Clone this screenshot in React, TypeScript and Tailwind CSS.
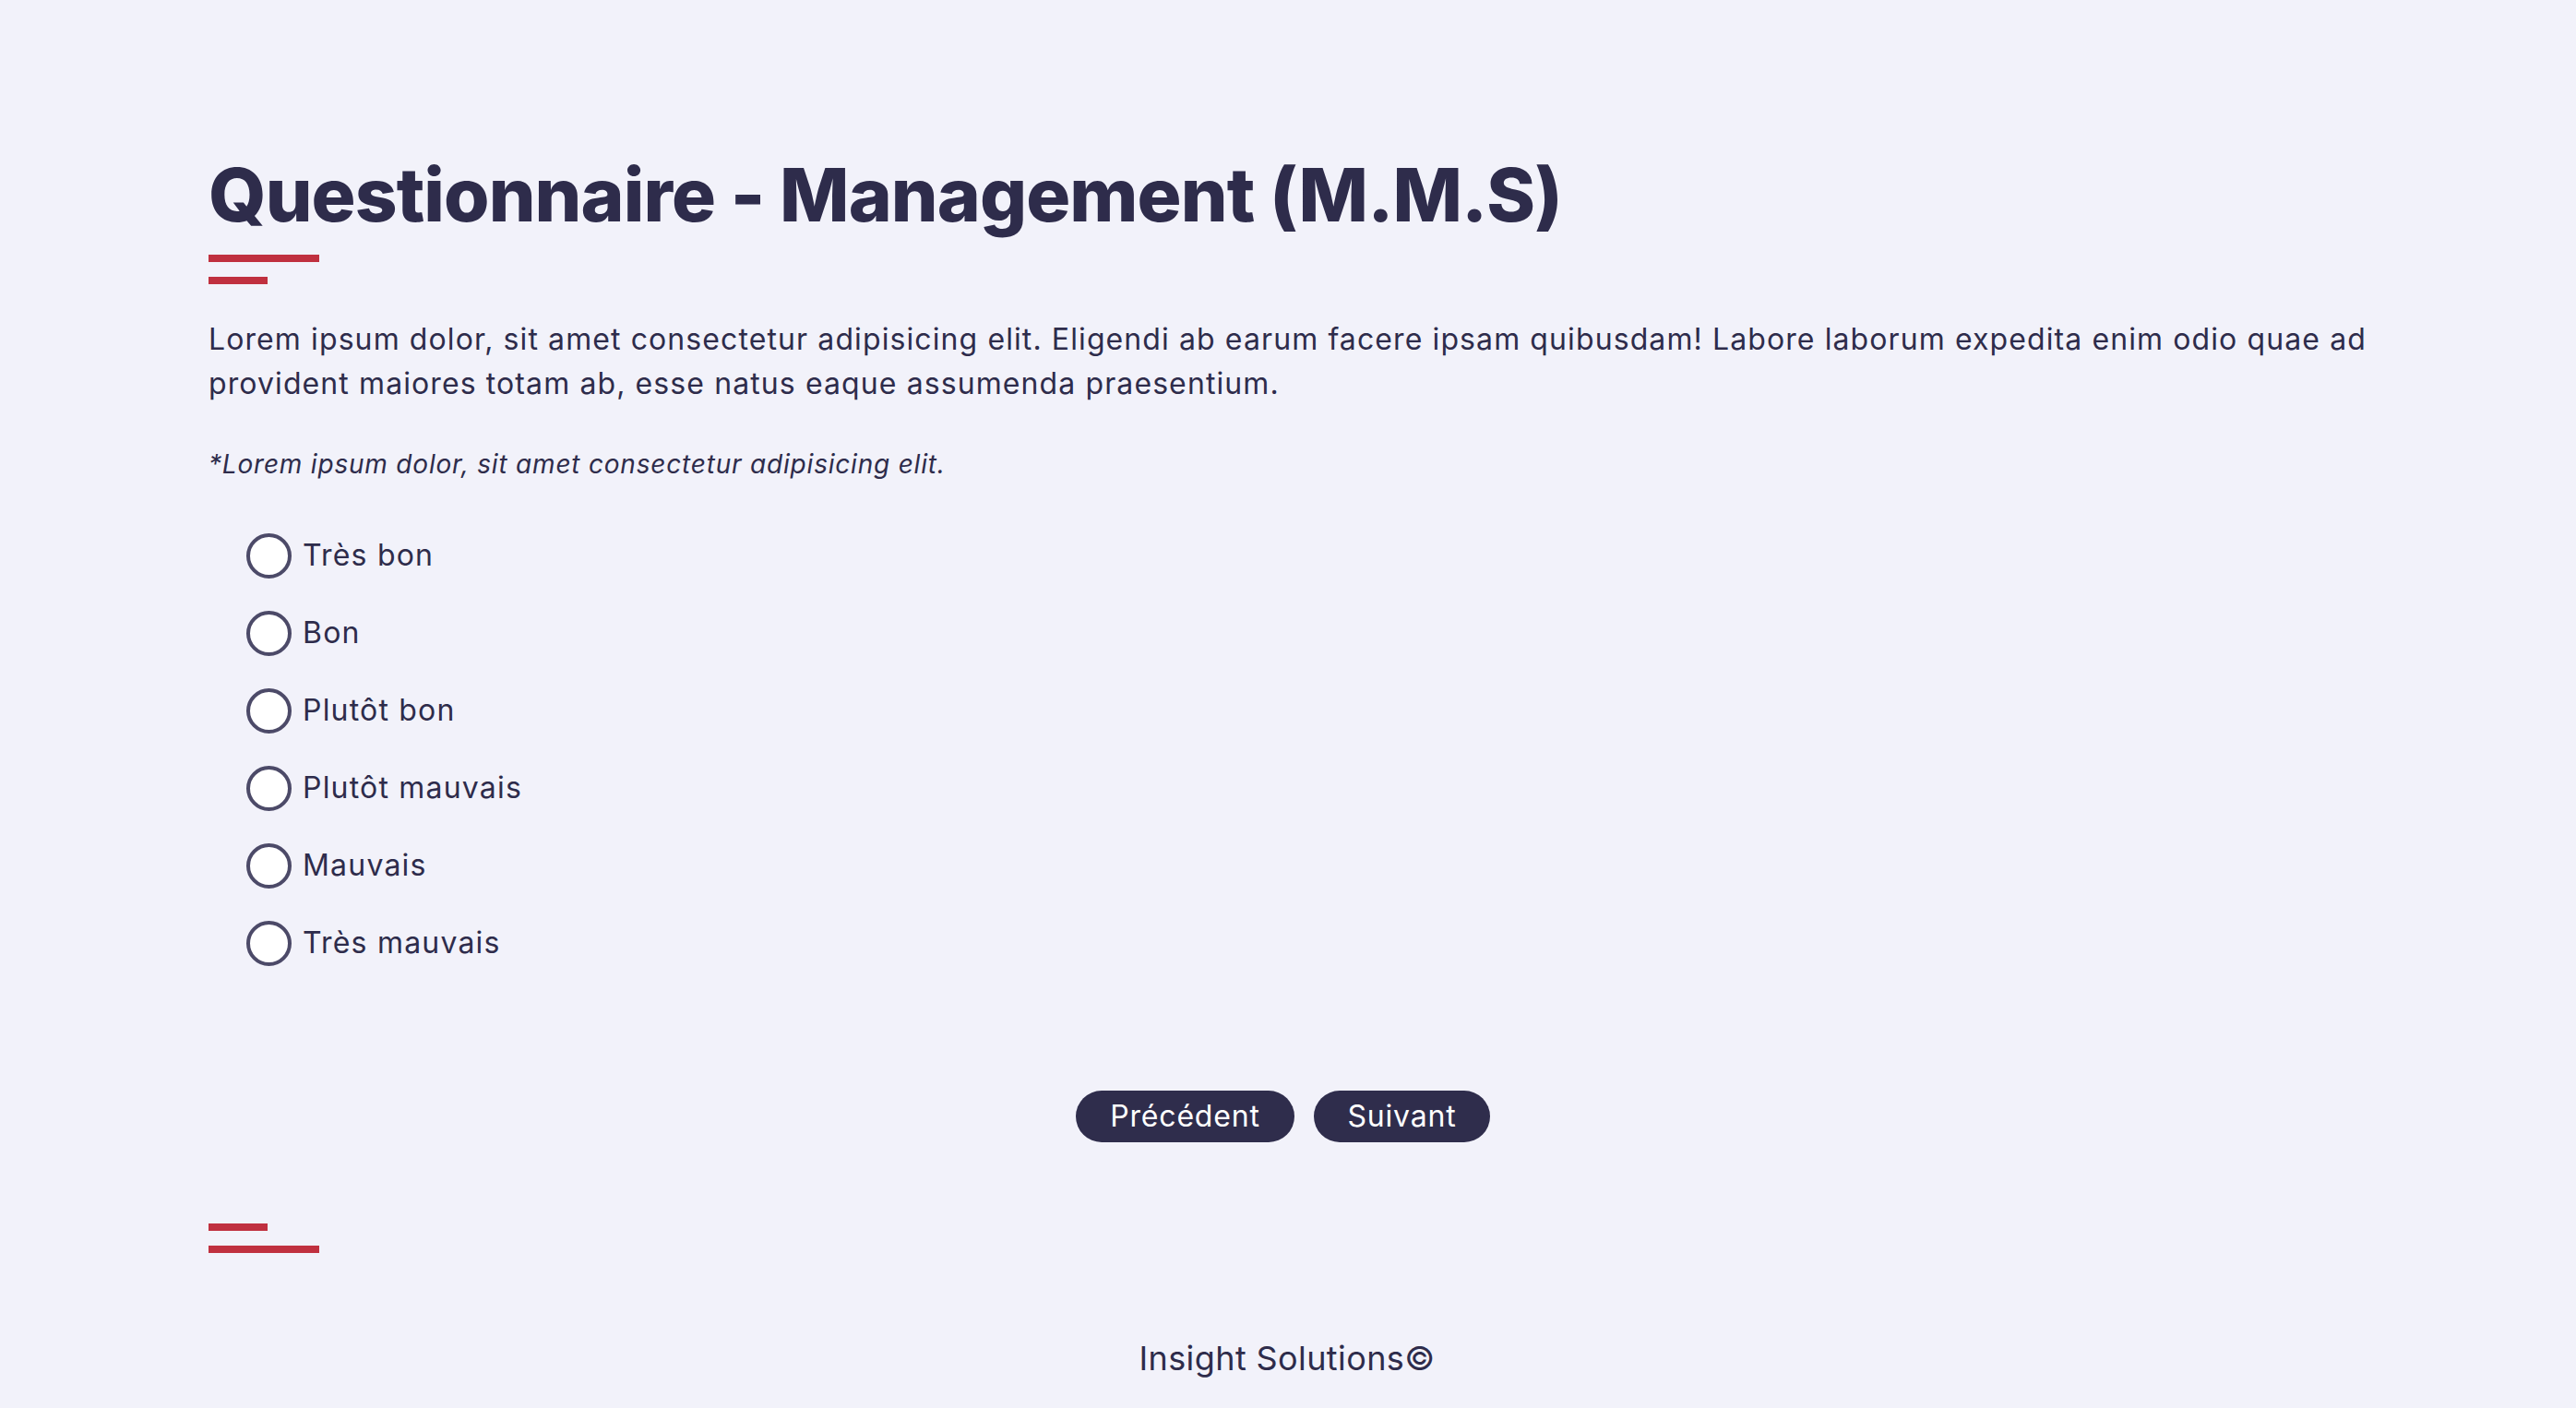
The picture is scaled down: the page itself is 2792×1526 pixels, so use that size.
import React from "react";

const options = ["Très bon", "Bon", "Plutôt bon", "Plutôt mauvais", "Mauvais", "Très mauvais"];

export default function App() {
  return (
    <div
      className="min-h-screen w-full bg-[#f2f2fa] text-[#2e2c4b]"
      style={{ fontFamily: "Inter, 'Noto Sans', sans-serif" }}
    >
      <div className="pl-[226px] pr-[216px] pt-[163px] pb-[27px]">
        <h1
          className="text-[80px] leading-[96px] font-extrabold tracking-[-0.9px] text-[#2e2c4b]"
          style={{ fontFamily: "Inter, 'Noto Sans', sans-serif" }}
        >
          Questionnaire - Management (M.M.S)
        </h1>
        <div className="mt-[17px] flex flex-col gap-[16px]">
          <div className="h-[8px] w-[120px] bg-[#c0303f]" />
          <div className="h-[8px] w-[64px] bg-[#c0303f]" />
        </div>
        <p className="mt-[36px] text-[32px] leading-[48px] tracking-[1.1px]">
          Lorem ipsum dolor, sit amet consectetur adipisicing elit. Eligendi ab earum facere ipsam quibusdam! Labore laborum expedita enim odio quae ad provident maiores totam ab, esse natus eaque assumenda praesentium.
        </p>
        <p className="mt-[42px] text-[28px] leading-[42px] italic tracking-[0.8px]">
          *Lorem ipsum dolor, sit amet consectetur adipisicing elit.
        </p>
        <div className="mt-[54px] ml-[41px] flex flex-col gap-[36px]">
          {options.map((o) => (
            <label key={o} className="flex items-center gap-[12px] h-[48px] cursor-pointer">
              <span className="block w-[49px] h-[49px] rounded-full border-[4px] border-[#4c4a68] bg-white" />
              <span className="text-[32px] leading-[48px] tracking-[1.2px]">{o}</span>
            </label>
          ))}
        </div>
        <div className="mt-[136px] flex justify-center gap-[21px] pr-[21px]">
          <button className="h-[56px] w-[237px] rounded-full bg-[#2f2d4c] text-white text-[32px] leading-[48px] tracking-[0.8px]">
            Précédent
          </button>
          <button className="h-[56px] w-[191px] rounded-full bg-[#2f2d4c] text-white text-[32px] leading-[48px] tracking-[0.8px]">
            Suivant
          </button>
        </div>
        <div className="mt-[88px] flex flex-col gap-[16px]">
          <div className="h-[8px] w-[64px] bg-[#c0303f]" />
          <div className="h-[8px] w-[120px] bg-[#c0303f]" />
        </div>
        <footer className="mt-[87px] pr-[12px] text-center text-[36px] leading-[54px] tracking-[0.4px]">Insight Solutions©</footer>
      </div>
    </div>
  );
}
